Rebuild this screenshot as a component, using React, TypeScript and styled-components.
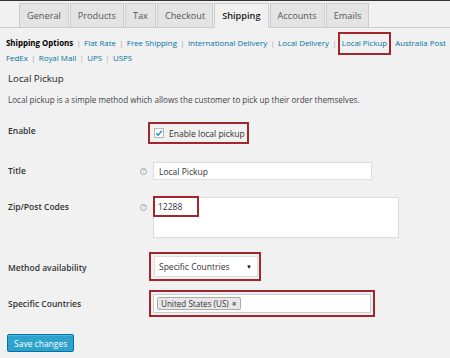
import React from "react";
import styled, { createGlobalStyle } from "styled-components";

const Global = createGlobalStyle`
  html, body { margin: 0; padding: 0; background: #f1f1f1; }
  body { font-family: "Open Sans", "Liberation Sans", sans-serif; color: #444; }
  * { box-sizing: border-box; }
`;

const RED = "#a3262c";

const Page = styled.div`
  width: 450px;
  height: 358px;
  border-top: 1px solid #333;
  overflow: hidden;
`;

const TabBar = styled.nav`
  display: flex;
  gap: 1px;
  padding: 2px 0 0 19px;
  border-bottom: 1px solid #ccc;
  height: 27px;
`;

const Tab = styled.div<{ $active?: boolean }>`
  height: 25px;
  padding: 0 7px;
  display: flex;
  align-items: center;
  font-size: 9.2px;
  color: ${(p) => (p.$active ? "#222" : "#555")};
  font-weight: ${(p) => (p.$active ? 600 : 400)};
  background: ${(p) => (p.$active ? "#f1f1f1" : "#e4e4e4")};
  border: 1px solid #ccc;
  border-bottom-color: ${(p) => (p.$active ? "#f1f1f1" : "#ccc")};
  margin-bottom: -1px;
`;

const SubNav = styled.div`
  margin-top: 8px;
  padding-left: 6px;
  font-size: 7.9px;
  line-height: 15px;
`;

const SubLine = styled.div`
  display: flex;
  align-items: center;
  white-space: nowrap;
`;

const SubLink = styled.span<{ $current?: boolean; $boxed?: boolean }>`
  color: ${(p) => (p.$current ? "#000" : "#0074a2")};
  font-weight: ${(p) => (p.$current ? 700 : 400)};
  ${(p) =>
    p.$boxed
      ? `outline: 2px solid ${RED}; outline-offset: 2px; margin: 0 2px;`
      : ""}
`;

const Sep = styled.span`
  color: #aaa;
  margin: 0 3.3px;
`;

const Heading = styled.h2`
  margin: 5px 0 0 8px;
  font-size: 9.7px;
  line-height: 16px;
  font-weight: 400;
  color: #222;
`;

const Desc = styled.p`
  margin: 7px 0 0 8px;
  font-size: 8.1px;
  line-height: 12px;
  color: #444;
`;

const Row = styled.div<{ $top: number }>`
  display: grid;
  grid-template-columns: 129px 16px 1fr;
  align-items: start;
  padding-left: 8px;
  margin-top: ${(p) => p.$top}px;
`;

const Label = styled.div<{ $lh: number }>`
  font-size: 8.5px;
  font-weight: 600;
  color: #333;
  line-height: ${(p) => p.$lh}px;
  white-space: nowrap;
`;

const HelpCell = styled.div<{ $lh: number }>`
  height: ${(p) => p.$lh}px;
  display: flex;
  align-items: center;
  padding-left: 3px;
`;

const Help = styled.span`
  width: 7px;
  height: 7px;
  border-radius: 50%;
  border: 1px solid #aaa;
  color: #999;
  font-size: 5px;
  line-height: 5px;
  display: flex;
  align-items: center;
  justify-content: center;
`;

const CheckHighlight = styled.label`
  display: inline-flex;
  align-items: center;
  gap: 5px;
  height: 22px;
  margin-left: -5px;
  padding: 0 2px 0 4px;
  border: 2px solid ${RED};
  font-size: 8.5px;
  color: #333;
`;

const Checkbox = styled.span`
  width: 10px;
  height: 10px;
  border: 1px solid #b4b9be;
  background: #fff;
  display: flex;
  align-items: center;
  justify-content: center;
`;

const TextInput = styled.div<{ $w: number }>`
  width: ${(p) => p.$w}px;
  height: 18px;
  background: #fff;
  border: 1px solid #ddd;
  font-size: 8.5px;
  color: #333;
  display: flex;
  align-items: center;
  padding-left: 5px;
`;

const AreaWrap = styled.div`
  position: relative;
  width: 246px;
`;

const TextArea = styled.div`
  height: 41px;
  background: #fff;
  border: 1px solid #ddd;
  font-size: 8.5px;
  color: #333;
  padding: 3px 0 0 4px;
  line-height: 12px;
`;

const AreaMark = styled.div`
  position: absolute;
  left: 0;
  top: -1px;
  width: 46px;
  height: 21px;
  border: 2px solid ${RED};
`;

const BoxHighlight = styled.div<{ $w: number }>`
  width: ${(p) => p.$w}px;
  margin-left: -4px;
  border: 2px solid ${RED};
  padding: 2px;
`;

const Select = styled.div`
  height: 21px;
  width: 104px;
  margin-left: 1px;
  background: #fff;
  border: 1px solid #ddd;
  display: flex;
  align-items: center;
  justify-content: space-between;
  padding: 0 5px 0 4px;
  font-size: 8.5px;
  color: #333;
`;

const Arrow = styled.span`
  font-size: 6px;
  color: #111;
`;

const MultiInput = styled.div`
  height: 19px;
  background: #fff;
  border: 1px solid #ccc;
  display: flex;
  align-items: center;
  padding-left: 3px;
`;

const Chip = styled.span`
  height: 13px;
  display: inline-flex;
  align-items: center;
  gap: 3px;
  padding: 0 3px;
  background: #e8e8e8;
  border: 1px solid #aaa;
  border-radius: 2px;
  font-size: 8.1px;
  color: #333;
`;

const ChipX = styled.span`
  font-size: 8.5px;
  color: #555;
  font-weight: 700;
`;

const Button = styled.button`
  display: block;
  margin: 16px 0 0 7px;
  height: 18px;
  padding: 0 6px;
  background: #2ea2cc;
  border: 1px solid #0074a2;
  border-radius: 2px;
  color: #fff;
  font-family: inherit;
  font-size: 8.5px;
  box-shadow: inset 0 1px 0 rgba(120, 200, 230, 0.5);
`;

const tabs = ["General", "Products", "Tax", "Checkout", "Shipping", "Accounts", "Emails"];

const line1: { t: string; current?: boolean; boxed?: boolean }[] = [
  { t: "Shipping Options", current: true },
  { t: "Flat Rate" },
  { t: "Free Shipping" },
  { t: "International Delivery" },
  { t: "Local Delivery" },
  { t: "Local Pickup", boxed: true },
];
const line2 = ["FedEx", "Royal Mail", "UPS", "USPS"];

export default function App() {
  return (
    <Page>
      <Global />
      <TabBar>
        {tabs.map((t) => (
          <Tab key={t} $active={t === "Shipping"}>
            {t}
          </Tab>
        ))}
      </TabBar>
      <SubNav>
        <SubLine>
          {line1.map((l, i) => (
            <React.Fragment key={l.t}>
              {i > 0 && <Sep>|</Sep>}
              <SubLink $current={l.current} $boxed={l.boxed}>
                {l.t}
              </SubLink>
            </React.Fragment>
          ))}
          <SubLink style={{ marginLeft: 6 }}>Australia Post</SubLink>
        </SubLine>
        <SubLine>
          {line2.map((l, i) => (
            <React.Fragment key={l}>
              {i > 0 && <Sep>|</Sep>}
              <SubLink>{l}</SubLink>
            </React.Fragment>
          ))}
        </SubLine>
      </SubNav>
      <Heading>Local Pickup</Heading>
      <Desc>
        Local pickup is a simple method which allows the customer to pick up their order themselves.
      </Desc>

      <Row $top={14}>
        <Label $lh={22}>Enable</Label>
        <div />
        <div>
          <CheckHighlight>
            <Checkbox>
              <svg width="8" height="8" viewBox="0 0 8 8">
                <path d="M1.2 4.2 L3.2 6.2 L6.8 1.6" fill="none" stroke="#1e8cbe" strokeWidth="1.4" />
              </svg>
            </Checkbox>
            Enable local pickup
          </CheckHighlight>
        </div>
      </Row>

      <Row $top={18}>
        <Label $lh={18}>Title</Label>
        <HelpCell $lh={18}>
          <Help>?</Help>
        </HelpCell>
        <TextInput $w={219}>Local Pickup</TextInput>
      </Row>

      <Row $top={17}>
        <Label $lh={20}>Zip/Post Codes</Label>
        <HelpCell $lh={20}>
          <Help>?</Help>
        </HelpCell>
        <AreaWrap>
          <TextArea>12288</TextArea>
          <AreaMark />
        </AreaWrap>
      </Row>

      <Row $top={14}>
        <Label $lh={31}>Method availability</Label>
        <div />
        <BoxHighlight $w={112}>
          <Select>
            Specific Countries
            <Arrow>▼</Arrow>
          </Select>
        </BoxHighlight>
      </Row>

      <Row $top={7}>
        <Label $lh={28}>Specific Countries</Label>
        <div />
        <BoxHighlight $w={226}>
          <MultiInput>
            <Chip>
              United States (US)
              <ChipX>×</ChipX>
            </Chip>
          </MultiInput>
        </BoxHighlight>
      </Row>

      <Button>Save changes</Button>
    </Page>
  );
}
